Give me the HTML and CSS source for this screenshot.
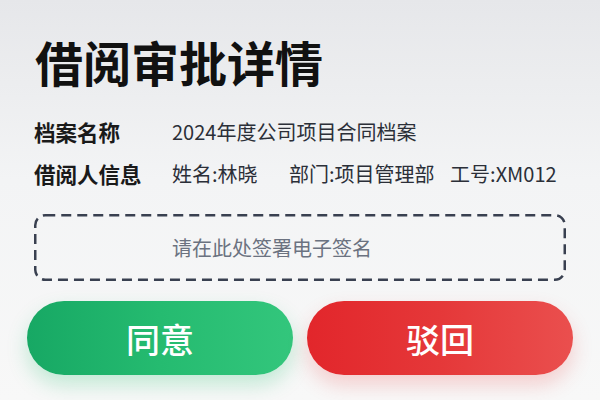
FILE: index.html
```html
<!DOCTYPE html>
<html>
<head>
    <meta charset="UTF-8">
    <title>借阅审批详情</title>
    <link rel="stylesheet" href="styles.css">
</head>
<body>
    <div class="page">
        <h1 class="title">借阅审批详情</h1>
        <div class="info">
            <div class="row">
                <span class="label">档案名称</span>
                <span class="value">2024年度公司项目合同档案</span>
            </div>
            <div class="row">
                <span class="label">借阅人信息</span>
                <span class="value">
                    <span class="name">姓名:林晓</span>
                    <span class="dept">部门:项目管理部</span>
                    <span class="no">工号:XM012</span>
                </span>
            </div>
        </div>
        <div class="sign">
            <svg class="dash" width="532" height="67" viewBox="0 0 532 67">
                <rect x="1.25" y="1.25" width="529.5" height="64.5" rx="10" ry="10" fill="none" stroke="#394050" stroke-width="2.5" stroke-dasharray="10 6"/>
            </svg>
            请在此处签署电子签名
        </div>
        <div class="btns">
            <a href="javascript:;" class="btn agree">同意</a>
            <a href="javascript:;" class="btn reject">驳回</a>
        </div>
    </div>
</body>
</html>
```

FILE: styles.css
```css
*{margin: 0;padding: 0;box-sizing: border-box;}
html,body{height: 100%;}
body{
    font-family: "Noto Sans CJK SC", "Noto Sans", sans-serif;
    background: linear-gradient(180deg, #e6e7ea 0%, #f3f4f5 45%, #f8f8f8 100%);
    color: #222;
}
.page{
    padding: 37px 27px 0 34px;
}
.title{
    font-size: 48px;
    line-height: 48px;
    font-weight: 700;
    color: #111;
    margin-left: 1px;
}
.info{
    margin-top: 29px;
}
.row{
    display: flex;
    line-height: 36px;
    height: 36px;
}
.row + .row{
    margin-top: 6px;
}
.label{
    width: 138px;
    flex-shrink: 0;
    font-size: 21.5px;
    font-weight: 700;
    color: #1a1a1a;
}
.value{
    font-size: 20px;
    color: #2b2f38;
    white-space: nowrap;
}
.name{
    margin-right: 27px;
}
.dept{
    margin-right: 11px;
}
.sign{
    position: relative;
    margin-top: 22px;
    width: 532px;
    height: 67px;
    display: flex;
    align-items: center;
    padding-left: 138px;
    font-size: 20px;
    color: #6b7280;
}
.dash{
    position: absolute;
    left: 0; top: 0;
}
.btns{
    display: flex;
    gap: 14px;
    margin-top: 20px;
    margin-left: -7px;
}
.btn{
    display: flex;
    align-items: center;
    justify-content: center;
    width: 266px;
    height: 74px;
    border-radius: 37px;
    color: #fff;
    font-size: 34px;
    font-weight: 500;
    text-decoration: none;
}
.agree{
    background: linear-gradient(90deg, #17a864 0%, #25bb70 50%, #33c67c 100%);
    box-shadow: 0 10px 20px rgba(34, 190, 110, .25);
}
.reject{
    background: linear-gradient(90deg, #e2262b 0%, #e53839 50%, #ea4f4e 100%);
    box-shadow: 0 10px 20px rgba(230, 60, 60, .22);
}
```
